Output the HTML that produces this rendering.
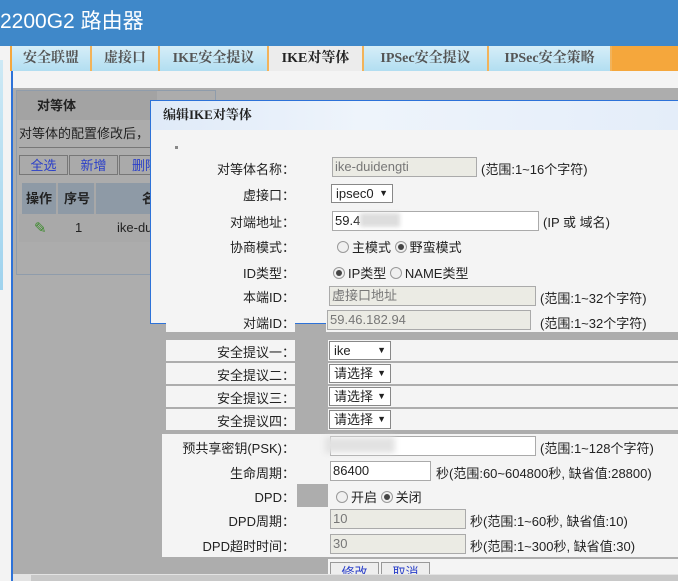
<!DOCTYPE html>
<html><head><meta charset="utf-8"><style>
*{margin:0;padding:0;box-sizing:border-box}
body{width:678px;height:581px;overflow:hidden;background:#adadad;font-family:"Liberation Sans","Noto Sans CJK SC",sans-serif;font-size:13px;color:#222;position:relative}
.a{position:absolute}
.hdr{left:0;top:0;width:678px;height:46px;background:#3f88c9;color:#fff;font-size:21px;line-height:44px}
.tabs{left:10px;top:46px;width:668px;height:25px;background:#f5a73c}
.tab{position:absolute;top:0;height:25px;background:linear-gradient(#d6eef8,#b2def1);border-right:2px solid #f2b35a;font-weight:bold;color:#555;font-size:14px;line-height:26px;text-align:center;font-family:"Liberation Serif","Noto Serif CJK SC",serif}
.lbl{text-align:right;font-size:13px}
.cell{background:#f4f4f4}
.inp{position:absolute;border:1px solid #aaa;height:20px;line-height:18px;padding-left:2px;font-size:13px}
.g{background:#ebebe4;color:#777}
.w{background:#fff}
.sel{position:absolute;border:1px solid #888;background:#fff;height:19px;line-height:17px;padding-left:4px;font-size:13px}
.sel:after{content:"▼";position:absolute;right:4px;top:0;font-size:9px}
.rad{display:inline-block;width:12px;height:12px;border:1px solid #999;border-radius:50%;background:#f0f0f0;vertical-align:-1px;margin-right:3px;position:relative}
.rad.on:after{content:"";position:absolute;left:2px;top:2px;width:6px;height:6px;border-radius:50%;background:#444}
</style></head><body>
<div class="a hdr">2200G2 路由器</div>
<div class="a" style="left:0;top:46px;width:11px;height:535px;background:#f3f3f3"></div>
<div class="a" style="left:0;top:60px;width:3px;height:230px;background:linear-gradient(#cde9f5,#9fd3ee)"></div>
<div class="a" style="left:11px;top:46px;width:2px;height:535px;background:#2d72d8"></div>
<div class="a tabs">
<div class="tab" style="left:2px;width:80px">安全联盟</div>
<div class="tab" style="left:82px;width:68px">虚接口</div>
<div class="tab" style="left:150px;width:109px">IKE安全提议</div>
<div class="tab" style="left:259px;width:95px;background:#ececec;color:#222">IKE对等体</div>
<div class="tab" style="left:354px;width:125px">IPSec安全提议</div>
<div class="tab" style="left:479px;width:123px">IPSec安全策略</div>
</div>
<div class="a" style="left:13px;top:71px;width:665px;height:17px;background:#f4f4f4"></div>
<!-- background panel -->
<div class="a" style="left:16px;top:90px;width:200px;height:185px;border:1px solid #8f9cab;background:#acacac"></div>
<div class="a" style="left:17px;top:91px;width:140px;height:29px;background:#a3a3a3;font-weight:bold;line-height:30px;padding-left:20px">对等体</div>
<div class="a" style="left:19px;top:123px;font-size:13px">对等体的配置修改后，</div>
<div class="a" style="left:19px;top:147px;width:135px;height:1px;background:#777"></div>
<div class="a" style="left:19px;top:155px;width:49px;height:20px;border:1px solid #777;background:#aaa;color:#2a3fc9;text-align:center;line-height:19px">全选</div>
<div class="a" style="left:69px;top:155px;width:49px;height:20px;border:1px solid #777;background:#aaa;color:#2a3fc9;text-align:center;line-height:19px">新增</div>
<div class="a" style="left:119px;top:155px;width:40px;height:20px;border:1px solid #777;background:#aaa;color:#2a3fc9;line-height:19px;padding-left:12px">删除</div>
<div class="a" style="left:22px;top:183px;width:128px;height:31px;background:#8e9aa6"></div>
<div class="a" style="left:22px;top:183px;width:36px;height:31px;border-right:2px solid #a8a8a8;font-weight:bold;line-height:31px;text-align:center">操作</div>
<div class="a" style="left:60px;top:183px;width:36px;height:31px;border-right:2px solid #a8a8a8;font-weight:bold;line-height:31px;text-align:center">序号</div>
<div class="a" style="left:142px;top:183px;font-weight:bold;line-height:31px">名</div>
<div class="a" style="left:19px;top:214px;width:135px;height:28px;background:#a9a9a9"></div>
<div class="a" style="left:34px;top:219px;color:#3a8a2a;font-size:15px">✎</div>
<div class="a" style="left:75px;top:220px">1</div>
<div class="a" style="left:117px;top:220px">ike-du</div>
<!-- dialog -->
<div class="a" style="left:150px;top:100px;width:528px;height:224px;border:1px solid #2d72d8;border-right:none;background:#f4f4f4"></div>
<div class="a" style="left:151px;top:101px;width:527px;height:29px;background:linear-gradient(90deg,#dfeaf8,#eef4fb 40%,#e4edf9);font-weight:bold;font-family:'Liberation Serif','Noto Serif CJK SC',serif;line-height:28px;padding-left:12px;font-size:13px">编辑IKE对等体</div>
<div class="a" style="left:175px;top:146px;width:3px;height:3px;background:#888"></div>
<div class="a lbl" style="left:166px;top:159px;width:129px">对等体名称：</div>
<div class="inp g" style="left:332px;top:157px;width:145px">ike-duidengti</div>
<div class="a" style="left:481px;top:159px">(范围:1~16个字符)</div>
<div class="a lbl" style="left:166px;top:185px;width:129px">虚接口：</div>
<div class="sel" style="left:331px;top:184px;width:62px">ipsec0</div>
<div class="a lbl" style="left:166px;top:212px;width:129px">对端地址：</div>
<div class="inp w" style="left:332px;top:211px;width:207px">59.4<span style="display:inline-block;width:40px;height:14px;background:#ddd;vertical-align:-2px;filter:blur(2px)"></span></div>
<div class="a" style="left:543px;top:212px">(IP 或 域名)</div>
<div class="a lbl" style="left:166px;top:237px;width:129px">协商模式：</div>
<div class="a" style="left:337px;top:237px"><span class="rad"></span>主模式 <span class="rad on"></span>野蛮模式</div>
<div class="a lbl" style="left:166px;top:263px;width:129px">ID类型：</div>
<div class="a" style="left:333px;top:263px"><span class="rad on"></span>IP类型 <span class="rad"></span>NAME类型</div>
<div class="a lbl" style="left:166px;top:287px;width:129px">本端ID：</div>
<div class="inp g" style="left:329px;top:286px;width:207px">虚接口地址</div>
<div class="a" style="left:540px;top:288px">(范围:1~32个字符)</div>
<!-- 对端ID row -->
<div class="a cell" style="left:166px;top:312px;width:129px;height:20px"></div>
<div class="a cell" style="left:326px;top:308px;width:352px;height:24px"></div>
<div class="a lbl" style="left:166px;top:313px;width:129px">对端ID：</div>
<div class="inp g" style="left:327px;top:310px;width:204px;">59.46.182.94</div>
<div class="a" style="left:540px;top:313px">(范围:1~32个字符)</div>
<!-- proposals -->
<div class="a cell" style="left:166px;top:340px;width:129px;height:21px"></div><div class="a cell" style="left:328px;top:340px;width:350px;height:21px"></div>
<div class="a cell" style="left:166px;top:363px;width:129px;height:21px"></div><div class="a cell" style="left:328px;top:363px;width:350px;height:21px"></div>
<div class="a cell" style="left:166px;top:386px;width:129px;height:21px"></div><div class="a cell" style="left:328px;top:386px;width:350px;height:21px"></div>
<div class="a cell" style="left:166px;top:409px;width:129px;height:21px"></div><div class="a cell" style="left:328px;top:409px;width:350px;height:21px"></div>
<div class="a lbl" style="left:166px;top:342px;width:129px">安全提议一：</div><div class="sel" style="left:329px;top:341px;width:62px">ike</div>
<div class="a lbl" style="left:166px;top:365px;width:129px">安全提议二：</div><div class="sel" style="left:329px;top:364px;width:62px">请选择</div>
<div class="a lbl" style="left:166px;top:388px;width:129px">安全提议三：</div><div class="sel" style="left:329px;top:387px;width:62px">请选择</div>
<div class="a lbl" style="left:166px;top:411px;width:129px">安全提议四：</div><div class="sel" style="left:329px;top:410px;width:62px">请选择</div>
<!-- lower block -->
<div class="a cell" style="left:162px;top:434px;width:516px;height:123px"></div>
<div class="a" style="left:297px;top:484px;width:31px;height:23px;background:#adadad"></div>
<div class="a lbl" style="left:162px;top:438px;width:133px">预共享密钥(PSK)：</div>
<div class="inp w" style="left:330px;top:436px;width:206px"><span style="display:inline-block;width:70px;height:16px;background:#e2e2e2;filter:blur(3px);margin-left:-8px"></span></div>
<div class="a" style="left:540px;top:438px">(范围:1~128个字符)</div>
<div class="a lbl" style="left:162px;top:463px;width:133px">生命周期：</div>
<div class="inp w" style="left:330px;top:461px;width:101px">86400</div>
<div class="a" style="left:436px;top:463px">秒(范围:60~604800秒, 缺省值:28800)</div>
<div class="a lbl" style="left:162px;top:487px;width:133px">DPD：</div>
<div class="a" style="left:336px;top:487px"><span class="rad"></span>开启 <span class="rad on"></span>关闭</div>
<div class="a lbl" style="left:162px;top:511px;width:133px">DPD周期：</div>
<div class="inp g" style="left:330px;top:509px;width:136px">10</div>
<div class="a" style="left:470px;top:511px">秒(范围:1~60秒, 缺省值:10)</div>
<div class="a lbl" style="left:162px;top:536px;width:133px">DPD超时时间：</div>
<div class="inp g" style="left:330px;top:534px;width:136px">30</div>
<div class="a" style="left:470px;top:536px">秒(范围:1~300秒, 缺省值:30)</div>
<!-- buttons -->
<div class="a" style="left:328px;top:559px;width:350px;height:16px;background:#f4f4f4"></div>
<div class="a" style="left:330px;top:562px;width:49px;height:16px;border:1px solid #999;background:#eee;color:#2a3fc9;text-align:center;line-height:20px;overflow:hidden">修改</div>
<div class="a" style="left:381px;top:562px;width:49px;height:16px;border:1px solid #999;background:#eee;color:#2a3fc9;text-align:center;line-height:20px;overflow:hidden">取消</div>
<div class="a" style="left:13px;top:574px;width:665px;height:7px;background:#e3e3e3"></div>
<div class="a" style="left:31px;top:575px;width:647px;height:6px;background:#c8c8c8"></div>
</body></html>
